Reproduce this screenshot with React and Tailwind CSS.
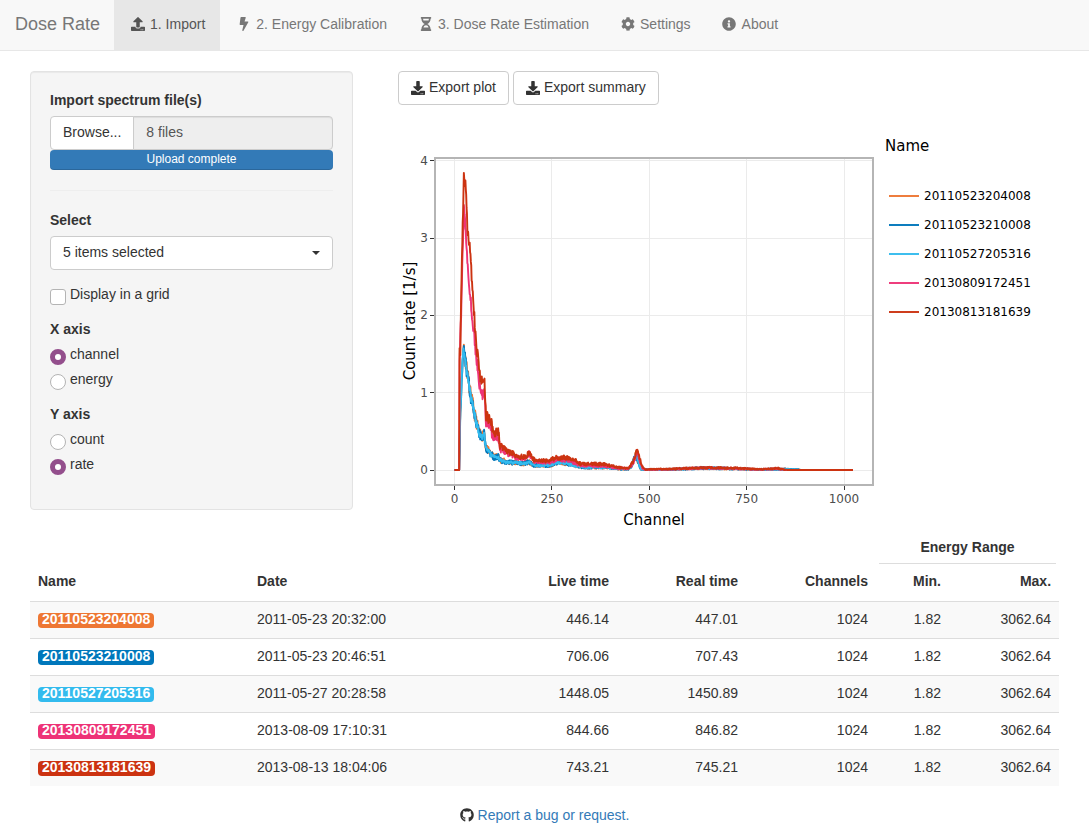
import { useState } from 'react';
import {
  FaUpload,
  FaDownload,
  FaBolt,
  FaHourglassHalf,
  FaCog,
  FaInfoCircle,
  FaGithub,
} from 'react-icons/fa';

const NAV = [
  { label: '1. Import', icon: FaUpload, active: true },
  { label: '2. Energy Calibration', icon: FaBolt },
  { label: '3. Dose Rate Estimation', icon: FaHourglassHalf },
  { label: 'Settings', icon: FaCog },
  { label: 'About', icon: FaInfoCircle },
];

const SPECTRA = [
  { name: '20110523204008', date: '2011-05-23 20:32:00', live: '446.14', real: '447.01', badge: 'bg-[#ee7733]', stroke: 'stroke-[#ee7733]' },
  { name: '20110523210008', date: '2011-05-23 20:46:51', live: '706.06', real: '707.43', badge: 'bg-[#0077bb]', stroke: 'stroke-[#0077bb]' },
  { name: '20110527205316', date: '2011-05-27 20:28:58', live: '1448.05', real: '1450.89', badge: 'bg-[#33bbee]', stroke: 'stroke-[#33bbee]' },
  { name: '20130809172451', date: '2013-08-09 17:10:31', live: '844.66', real: '846.82', badge: 'bg-[#ee3377]', stroke: 'stroke-[#ee3377]' },
  { name: '20130813181639', date: '2013-08-13 18:04:06', live: '743.21', real: '745.21', badge: 'bg-[#cc3311]', stroke: 'stroke-[#cc3311]' },
];

// [channel, count rate] knots of the smooth part of each spectrum
const LOW = [
  [0, 0], [12, 0], [15, 0.75], [19, 1.25], [23, 1.57], [29, 1.37], [40, 1.0], [53, 0.68], [64, 0.46],
  [70, 0.42], [76, 0.48], [80, 0.29], [90, 0.22], [102, 0.16], [111, 0.18], [117, 0.13], [135, 0.1],
  [160, 0.09], [180, 0.085], [190, 0.1], [205, 0.06], [245, 0.06], [262, 0.1], [292, 0.085], [312, 0.05],
  [340, 0.035], [390, 0.035], [420, 0.015], [447, 0.015], [456, 0.07], [466, 0.2], [472, 0.1],
  [479, 0.005], [560, 0.008], [635, 0.025], [720, 0.018], [780, 0.005], [830, 0.012], [885, 0.004], [890, 0], [1023, 0],
];
const MID = [
  [0, 0], [12, 0], [13, 1.4], [18, 2.2], [24, 3.45], [30, 2.95], [36, 2.5], [44, 2.05], [54, 1.55],
  [64, 1.12], [72, 0.95], [76, 1.05], [81, 0.62], [93, 0.57], [98, 0.41], [112, 0.43], [117, 0.27],
  [142, 0.2], [168, 0.15], [184, 0.14], [192, 0.21], [204, 0.11], [245, 0.1], [262, 0.14], [292, 0.13],
  [322, 0.06], [386, 0.055], [417, 0.025], [447, 0.02], [458, 0.08], [469, 0.24], [480, 0.04],
  [488, 0.004], [560, 0.01], [635, 0.025], [720, 0.02], [780, 0.006], [830, 0.015], [850, 0], [1023, 0],
];
const HIGH = [
  [0, 0], [12, 0], [13, 1.58], [15, 1.5], [18, 2.5], [24, 3.82], [29, 3.65], [34, 3.05], [38, 2.95], [44, 2.5],
  [52, 1.9], [58, 1.54], [66, 1.2], [72, 1.12], [76, 1.22], [81, 0.7], [94, 0.64], [99, 0.47], [113, 0.5],
  [117, 0.31], [142, 0.23], [168, 0.17], [184, 0.17], [192, 0.23], [204, 0.13], [245, 0.12], [262, 0.165],
  [292, 0.155], [312, 0.12], [322, 0.08], [386, 0.075], [417, 0.035], [447, 0.02], [458, 0.1], [469, 0.27],
  [481, 0.05], [489, 0.008], [560, 0.014], [635, 0.03], [720, 0.025], [780, 0.01], [830, 0.022], [855, 0], [1023, 0],
];
const CURVES = [
  { knots: LOW, scale: 1.02, noise: 0.1, seed: 11 },
  { knots: LOW, scale: 1.0, noise: 0.1, seed: 2911 },
  { knots: LOW, scale: 1.0, noise: 0.06, seed: 4703 },
  { knots: MID, scale: 1.0, noise: 0.08, seed: 61007 },
  { knots: HIGH, scale: 1.0, noise: 0.08, seed: 83003 },
];

const px = (channel) => 56.5 + channel * 0.3895;
const py = (rate) => 340 - rate * 77.3;

function tracePath({ knots, scale, noise, seed }) {
  let state = seed;
  const random = () => {
    state = (state * 16807) % 2147483647;
    return state / 2147483647 - 0.5;
  };
  random();
  const points = [];
  let k = 0;
  for (let c = 0; c <= 1023; c += 1) {
    while (k < knots.length - 2 && c > knots[k + 1][0]) k += 1;
    const [c0, r0] = knots[k];
    const [c1, r1] = knots[k + 1];
    const rate = (r0 + ((r1 - r0) * (c - c0)) / (c1 - c0)) * scale;
    const jitter = random() * noise * Math.sqrt(Math.min(Math.max(rate, 0), 0.8)) * 2;
    points.push(`${px(c).toFixed(2)},${py(Math.max(0, rate + jitter)).toFixed(2)}`);
  }
  return `M${points.join('L')}`;
}

const PATHS = CURVES.map(tracePath);

function NavBar() {
  return (
    <nav className="flex flex-wrap border-b border-[#e7e7e7] bg-[#f8f8f8]">
      <a href="#" className="pt-[14px] pr-[14px] pb-4 pl-[15px] text-lg leading-5 text-[#777]">Dose Rate</a>
      {NAV.map(({ label, icon: Icon, active }) => (
        <a
          key={label}
          href="#"
          className={`flex items-center gap-1 px-[15px] pt-[14px] pb-4 ${active ? 'bg-[#e7e7e7] text-[#555]' : 'text-[#777]'}`}
        >
          <span className="flex w-[17px] justify-center"><Icon className="size-[14px]" /></span>
          <span>{label}</span>
        </a>
      ))}
    </nav>
  );
}

function Radio({ name, value, checked, onChange }) {
  return (
    <label className="flex items-start gap-1">
      <input
        type="radio"
        name={name}
        checked={checked}
        onChange={onChange}
        className="mt-[5px] size-4 appearance-none rounded-full border border-[#b4b4b4] bg-white checked:border-[5px] checked:border-[#934e8c]"
      />
      {value}
    </label>
  );
}

function RadioGroup({ title, name, options, initial }) {
  const [value, setValue] = useState(initial);
  return (
    <fieldset className="mb-[14px]">
      <legend className="mb-[5px] font-bold">{title}</legend>
      <div className="flex flex-col gap-1">
        {options.map((o) => (
          <Radio key={o} name={name} value={o} checked={value === o} onChange={() => setValue(o)} />
        ))}
      </div>
    </fieldset>
  );
}

function Sidebar() {
  return (
    <form className="rounded border border-[#e3e3e3] bg-[#f5f5f5] px-[19px] pt-[18px] pb-5 shadow-[inset_0_1px_1px_rgba(0,0,0,0.05)]">
      <label htmlFor="files" className="mb-1.5 block font-bold">Import spectrum file(s)</label>
      <div className="flex">
        <label className="cursor-pointer rounded-l border border-[#ccc] bg-white px-3 pt-[5px] pb-[7px]">
          Browse...
          <input id="files" type="file" multiple className="sr-only" />
        </label>
        <input
          type="text"
          readOnly
          value="8 files"
          aria-label="Selected files"
          className="-ml-px h-[34px] min-w-0 flex-1 rounded-r border border-[#ccc] bg-[#eee] px-3 pb-0.5 text-[#555] shadow-[inset_0_1px_1px_rgba(0,0,0,0.075)]"
        />
      </div>
      <div className="h-5 rounded bg-[#337ab7] text-center text-xs leading-[18px] text-white shadow-[inset_0_-1px_0_rgba(0,0,0,0.15)]">
        Upload complete
      </div>
      <hr className="mt-5 mb-[19px] border-t border-[#eee]" />
      <label htmlFor="select" className="mb-1.5 block font-bold">Select</label>
      <div className="relative mb-[14px]">
        <select id="select" className="block h-[34px] w-full appearance-none rounded border border-[#ccc] bg-white px-3 pb-0.5">
          <option>5 items selected</option>
        </select>
        <span className="pointer-events-none absolute top-[15px] right-[13px] border-x-4 border-t-4 border-x-transparent border-t-[#333]" />
      </div>
      <label className="mb-[14px] flex items-start gap-1">
        <input
          type="checkbox"
          className="mt-[5px] size-4 appearance-none rounded-[3px] border border-[#b4b4b4] bg-white checked:bg-[#934e8c]"
        />
        Display in a grid
      </label>
      <RadioGroup title="X axis" name="x-axis" options={['channel', 'energy']} initial="channel" />
      <RadioGroup title="Y axis" name="y-axis" options={['count', 'rate']} initial="rate" />
    </form>
  );
}

function ExportButton({ children }) {
  return (
    <button type="button" className="flex items-end gap-1 rounded border border-[#ccc] bg-white px-3 pt-[5px] pb-[7px]">
      <FaDownload className="mb-0.5 size-[14px]" />
      {children}
    </button>
  );
}

function Chart() {
  return (
    <svg viewBox="0 0 486 400" className="min-w-0 flex-1 font-['DejaVu_Sans',sans-serif]" role="img" aria-label="Count rate by channel">
      <g className="stroke-[#ebebeb]" shapeRendering="crispEdges">
        {[0, 1, 2, 3, 4].map((r) => <line key={r} x1="37" x2="475" y1={py(r)} y2={py(r)} />)}
        {[0, 250, 500, 750, 1000].map((c) => <line key={c} y1="28" y2="355" x1={px(c)} x2={px(c)} />)}
      </g>
      {PATHS.map((d, i) => (
        <path key={SPECTRA[i].name} d={d} fill="none" strokeWidth="1.9" strokeLinejoin="round" className={SPECTRA[i].stroke} />
      ))}
      <rect x="37" y="28" width="438" height="327" fill="none" strokeWidth="2" className="stroke-[#b5b5b5]" shapeRendering="crispEdges" />
      <g className="stroke-[#333]" shapeRendering="crispEdges">
        {[0, 1, 2, 3, 4].map((r) => <line key={r} x1="32" x2="36" y1={py(r)} y2={py(r)} />)}
        {[0, 250, 500, 750, 1000].map((c) => <line key={c} y1="356" y2="360" x1={px(c)} x2={px(c)} />)}
      </g>
      <g className="fill-[#4d4d4d] text-[12px]">
        {[0, 1, 2, 3, 4].map((r) => <text key={r} x="30" y={py(r) + 4} textAnchor="end">{r}</text>)}
        {[0, 250, 500, 750, 1000].map((c) => <text key={c} x={px(c)} y="373" textAnchor="middle">{c}</text>)}
      </g>
      <g className="fill-black text-[15px]">
        <text x="256" y="395" textAnchor="middle">Channel</text>
        <text transform="translate(17 191) rotate(-90)" textAnchor="middle">Count rate [1/s]</text>
      </g>
    </svg>
  );
}

function Legend() {
  return (
    <div className="w-[160px] pt-1.5 pl-px font-['DejaVu_Sans',sans-serif] text-black">
      <p className="text-[15px]">Name</p>
      <ul className="mt-[25px] text-[12px]">
        {SPECTRA.map((s) => (
          <li key={s.name} className="flex h-[29px] items-center gap-[5px] pl-1">
            <svg viewBox="0 0 30 2" className="h-0.5 w-[30px]">
              <line x1="0" x2="30" y1="1" y2="1" strokeWidth="1.9" className={s.stroke} />
            </svg>
            {s.name}
          </li>
        ))}
      </ul>
    </div>
  );
}

function Summary() {
  return (
    <table className="w-full table-fixed border-separate border-spacing-0 text-right">
      <colgroup>
        <col className="w-[219px]" />
        <col className="w-[239px]" />
        <col className="w-[129px]" />
        <col className="w-[129px]" />
        <col className="w-[130px]" />
        <col className="w-[73px]" />
        <col className="w-[110px]" />
      </colgroup>
      <thead>
        <tr>
          <td colSpan={5} />
          <th colSpan={2} className="px-[3px] pt-[7px] text-center">
            <div className="border-b border-[#ddd] pb-1.5">Energy Range</div>
          </th>
        </tr>
        <tr>
          <th className="px-2 pt-[7px] pb-2.5 text-left">Name</th>
          <th className="px-2 pt-[7px] pb-2.5 text-left">Date</th>
          <th className="px-2 pt-[7px] pb-2.5">Live time</th>
          <th className="px-2 pt-[7px] pb-2.5">Real time</th>
          <th className="px-2 pt-[7px] pb-2.5">Channels</th>
          <th className="px-2 pt-[7px] pb-2.5">Min.</th>
          <th className="px-2 pt-[7px] pb-2.5">Max.</th>
        </tr>
      </thead>
      <tbody>
        {SPECTRA.map((s) => (
          <tr key={s.name} className="odd:bg-[#f9f9f9]">
            <td className="border-t border-[#ddd] px-2 pt-[7px] pb-[9px] text-left">
              <span className={`mt-0.5 block w-fit rounded px-1 pb-0.5 font-bold leading-[13px] text-white ${s.badge}`}>{s.name}</span>
            </td>
            <td className="border-t border-[#ddd] px-2 pt-[7px] pb-[9px] text-left">{s.date}</td>
            <td className="border-t border-[#ddd] px-2 pt-[7px] pb-[9px]">{s.live}</td>
            <td className="border-t border-[#ddd] px-2 pt-[7px] pb-[9px]">{s.real}</td>
            <td className="border-t border-[#ddd] px-2 pt-[7px] pb-[9px]">1024</td>
            <td className="border-t border-[#ddd] px-2 pt-[7px] pb-[9px]">1.82</td>
            <td className="border-t border-[#ddd] px-2 pt-[7px] pb-[9px]">3062.64</td>
          </tr>
        ))}
      </tbody>
    </table>
  );
}

export default function App() {
  return (
    <div className="min-h-screen bg-white font-['Liberation_Sans',Arial,sans-serif] text-sm leading-5 text-[#333]">
      <NavBar />
      <main className="px-[15px] pt-5">
        <div className="flex items-start">
          <div className="w-1/3 px-[15px]">
            <Sidebar />
          </div>
          <div className="w-2/3 px-[30px]">
            <div className="flex gap-1">
              <ExportButton>Export plot</ExportButton>
              <ExportButton>Export summary</ExportButton>
            </div>
            <div className="flex items-start pt-[25px]">
              <Chart />
              <Legend />
            </div>
          </div>
        </div>
        <div className="px-[15px]">
          <Summary />
        </div>
      </main>
      <footer className="flex items-center justify-center gap-1 pt-[19px]">
        <FaGithub className="size-[14px]" />
        <a href="#" className="text-[#337ab7]">Report a bug or request.</a>
      </footer>
    </div>
  );
}
